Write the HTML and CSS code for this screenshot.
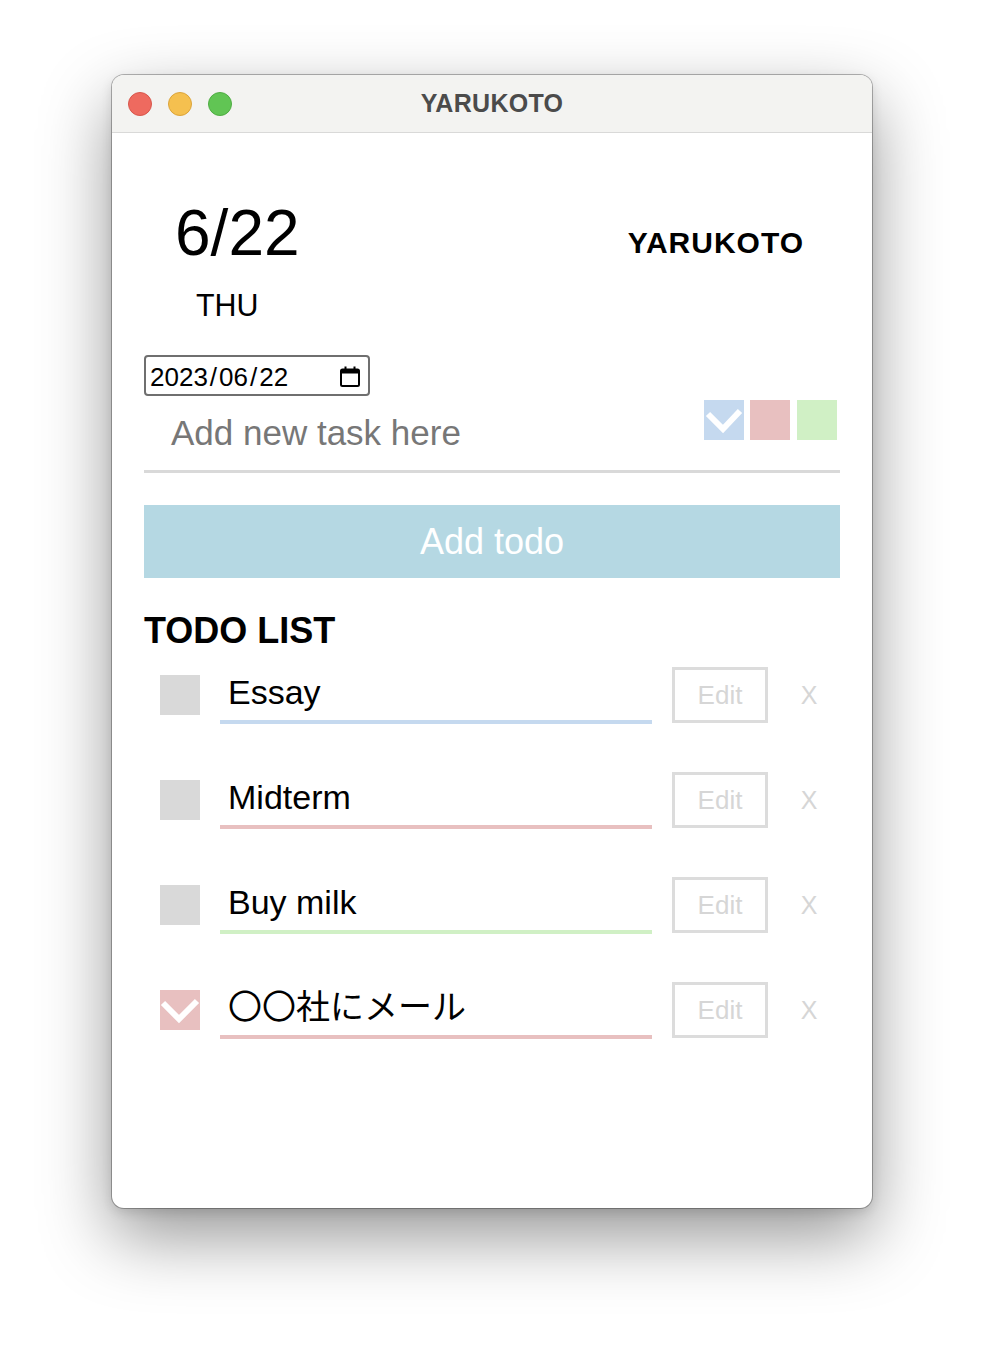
FILE: index.html
```html
<!DOCTYPE html>
<html lang="ja">
<head>
<meta charset="utf-8">
<title>YARUKOTO</title>
<link rel="stylesheet" href="styles.css">
</head>
<body>
<div class="window">
  <div class="titlebar">
    <div class="lights">
      <span class="light l-red"></span>
      <span class="light l-yellow"></span>
      <span class="light l-green"></span>
    </div>
    <div class="wintitle">YARUKOTO</div>
    <div></div>
  </div>
  <div class="content">
    <div class="header">
      <div class="date-block">
        <div class="bigdate">6/22</div>
        <div class="weekday">THU</div>
      </div>
      <div class="brand">YARUKOTO</div>
    </div>
    <div class="date-input">
      <span class="date-text">2023<span class="sep">/</span>06<span class="sep">/</span>22</span>
      <svg class="cal" width="20" height="21" viewBox="0 0 20 21"><rect x="1" y="3.5" width="18" height="16.5" rx="1.5" fill="none" stroke="#000" stroke-width="2"/><rect x="1" y="3.5" width="18" height="4" fill="#000"/><rect x="4.5" y="0.5" width="2" height="4" fill="#000"/><rect x="13.5" y="0.5" width="2" height="4" fill="#000"/></svg>
    </div>
    <div class="new-task">
      <span class="placeholder">Add new task here</span>
      <div class="swatches">
        <span class="swatch blue"><svg width="40" height="40" viewBox="0 0 40 40"><polyline points="4,14 19,29 36,11" fill="none" stroke="#fff" stroke-width="6"/></svg></span>
        <span class="swatch pink"></span>
        <span class="swatch green"></span>
      </div>
    </div>
    <div class="add-btn">Add todo</div>
    <h2 class="list-title">TODO LIST</h2>
    <div class="todos">
      <div class="todo">
        <span class="check"></span>
        <div class="field u-blue">Essay</div>
        <div class="edit">Edit</div>
        <div class="del">X</div>
      </div>
      <div class="todo">
        <span class="check"></span>
        <div class="field u-pink">Midterm</div>
        <div class="edit">Edit</div>
        <div class="del">X</div>
      </div>
      <div class="todo">
        <span class="check"></span>
        <div class="field u-green">Buy milk</div>
        <div class="edit">Edit</div>
        <div class="del">X</div>
      </div>
      <div class="todo">
        <span class="check checked"><svg width="40" height="40" viewBox="0 0 40 40"><polyline points="3,13 19,29 37,11" fill="none" stroke="#fff" stroke-width="6"/></svg></span>
        <div class="field u-pink">〇〇社にメール</div>
        <div class="edit">Edit</div>
        <div class="del">X</div>
      </div>
    </div>
  </div>
</div>
</body>
</html>
```

FILE: styles.css
```css
html, body {
  margin: 0;
  padding: 0;
  background: #ffffff;
}
body {
  font-family: "Liberation Sans", "Noto Sans CJK JP", sans-serif;
  color: #000;
  padding: 75px 0 0 112px;
  height: 1356px;
  box-sizing: border-box;
  overflow: hidden;
}
.window {
  width: 760px;
  height: 1133px;
  background: #fff;
  border-radius: 12px;
  overflow: hidden;
  box-shadow: 0 0 0 1px rgba(0,0,0,0.28), 0 28px 70px rgba(0,0,0,0.42), 0 4px 12px rgba(0,0,0,0.12);
}
.titlebar {
  height: 57px;
  background: #f3f3f1;
  border-bottom: 1px solid #d9d9d8;
  display: grid;
  grid-template-columns: 1fr auto 1fr;
  align-items: center;
}
.lights {
  display: flex;
  gap: 16px;
  padding-left: 16px;
}
.light {
  width: 24px;
  height: 24px;
  border-radius: 50%;
  box-sizing: border-box;
}
.l-red { background: #ee6a5f; border: 1px solid #d8564c; }
.l-yellow { background: #f5c04f; border: 1px solid #dca43a; }
.l-green { background: #61c554; border: 1px solid #4fad43; }
.wintitle {
  font-size: 25px;
  font-weight: bold;
  color: #4b4b4b;
  letter-spacing: 0.3px;
}
.content {
  padding: 0 32px;
}
.header {
  display: flex;
  justify-content: space-between;
  align-items: flex-start;
  margin-top: 68px;
}
.date-block {
  padding-left: 31px;
}
.bigdate {
  font-size: 64px;
  line-height: 64px;
}
.weekday {
  font-size: 32px;
  line-height: 32px;
  margin-top: 24px;
  margin-left: 21px;
  transform: scaleX(0.95);
  transform-origin: left;
}
.brand {
  font-size: 30px;
  line-height: 30px;
  font-weight: bold;
  letter-spacing: 1px;
  margin-top: 27px;
  padding-right: 36px;
}
.date-input {
  margin-top: 34px;
  width: 226px;
  height: 41px;
  box-sizing: border-box;
  border: 2px solid #6f6f6f;
  border-radius: 4px;
  display: flex;
  align-items: center;
  justify-content: space-between;
  padding: 0 8px 0 4px;
  font-size: 26px;
}
.date-text { line-height: 26px; margin-top: 2px; }
.sep { margin: 0 2px; }
.cal { display: block; margin-top: 1px; }
.new-task {
  height: 77px;
  box-sizing: border-box;
  border-bottom: 3px solid #d9d9d9;
  display: flex;
  justify-content: space-between;
  align-items: flex-start;
  padding: 4px 3px 0 27px;
}
.placeholder {
  font-size: 35px;
  line-height: 35px;
  color: #777;
  margin-top: 15px;
}
.swatches {
  display: flex;
  gap: 6px;
}
.swatch {
  width: 40px;
  height: 40px;
  display: block;
}
.swatch svg { display: block; }
.swatch.pink { margin-right: 1px; }
.blue { background: #c5d9ef; }
.pink { background: #e8c0c0; }
.green { background: #d0f0c5; }
.add-btn {
  margin-top: 32px;
  height: 73px;
  background: #b5d8e3;
  color: #fff;
  font-size: 36px;
  display: flex;
  align-items: center;
  justify-content: center;
}
.list-title {
  margin: 35px 0 0 0;
  font-size: 36px;
  line-height: 36px;
  font-weight: bold;
}
.todos {
  margin-top: 18px;
  display: flex;
  flex-direction: column;
  gap: 49px;
}
.todo {
  height: 56px;
  display: flex;
  align-items: center;
  padding-left: 16px;
}
.check {
  width: 40px;
  height: 40px;
  background: #d9d9d9;
  display: block;
  flex: none;
}
.check svg { display: block; }
.check.checked { background: #e8c0c0; }
.field {
  flex: none;
  align-self: flex-start;
  margin-left: 20px;
  width: 432px;
  height: 57px;
  box-sizing: border-box;
  padding: 8px 0 0 8px;
  font-size: 34px;
  line-height: 34px;
  border-bottom: 4px solid #c5d9ef;
}
.u-blue { border-bottom-color: #c5d9ef; }
.u-pink { border-bottom-color: #e8c0c0; }
.u-green { border-bottom-color: #d0f0c5; }
.edit {
  flex: none;
  margin-left: 20px;
  width: 96px;
  height: 56px;
  box-sizing: border-box;
  border: 3px solid #dcdcdc;
  color: #d6d6d6;
  font-size: 26px;
  display: flex;
  align-items: center;
  justify-content: center;
}
.del {
  flex: none;
  width: 72px;
  box-sizing: border-box;
  padding-left: 10px;
  text-align: center;
  font-size: 25px;
  color: #d6d6d6;
}
```
